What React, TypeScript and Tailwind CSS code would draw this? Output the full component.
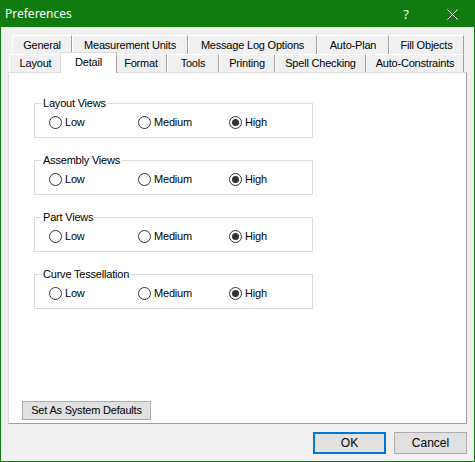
import React from "react";

const topTabs: [string, number][] = [
  ["General", 60],
  ["Measurement Units", 116],
  ["Message Log Options", 129],
  ["Auto-Plan", 72],
  ["Fill Objects", 75],
];

const bottomTabs: [string, number][] = [
  ["Layout", 53],
  ["Detail", 53],
  ["Format", 52],
  ["Tools", 52],
  ["Printing", 56],
  ["Spell Checking", 91],
  ["Auto-Constraints", 98],
];

const groups = ["Layout Views", "Assembly Views", "Part Views", "Curve Tessellation"];

function Radio({ label, checked, w }: { label: string; checked?: boolean; w: string }) {
  return (
    <div className={`flex items-center ${w}`}>
      <div className="w-[13px] h-[13px] rounded-full border border-[#333333] bg-white flex items-center justify-center">
        {checked && <div className="w-[7px] h-[7px] rounded-full bg-[#333333]" />}
      </div>
      <span className="ml-[3px] text-[11px] leading-[13px] tracking-[-0.2px] text-black">{label}</span>
    </div>
  );
}

function Group({ title }: { title: string }) {
  return (
    <div className="relative w-[279px] h-[35px] border border-[#dcdcdc]">
      <span className="absolute left-[7px] -top-[8px] bg-white px-[1px] text-[11px] leading-[14px] tracking-[-0.2px] text-black">
        {title}
      </span>
      <div className="flex pt-[12px] pl-[14px]">
        <Radio label="Low" w="w-[89px]" />
        <Radio label="Medium" w="w-[91px]" />
        <Radio label="High" w="w-[60px]" checked />
      </div>
    </div>
  );
}

export default function App() {
  return (
    <div
      className="w-[475px] h-[462px] border border-[#107c10] bg-[#f0f0f0] flex flex-col overflow-hidden"
      style={{ fontFamily: '"Liberation Sans", Arial, sans-serif' }}
    >
      {/* Title bar */}
      <div className="h-[26px] bg-[#107c10] flex items-center text-white">
        <span className="ml-[4px] text-[12px] leading-[16px]" style={{ fontFamily: '"Noto Sans", sans-serif' }}>
          Preferences
        </span>
        <span className="ml-auto mr-[38px] text-[13px] leading-[16px]" style={{ fontFamily: '"Noto Sans", sans-serif' }}>
          ?
        </span>
        <svg width="11" height="11" viewBox="0 0 11 11" className="mr-[16px]">
          <path d="M0.5 0.5 L10.5 10.5 M10.5 0.5 L0.5 10.5" stroke="white" strokeWidth="1" />
        </svg>
      </div>

      {/* Tabs row 1 */}
      <div className="flex mt-[8px] ml-[11px] h-[19px]">
        {topTabs.map(([t, w]) => (
          <div
            key={t}
            className="flex items-center justify-center border-l border-t border-white border-r border-r-[#a0a0a0] text-[11px] leading-[13px] tracking-[-0.2px] text-black"
            style={{ width: w }}
          >
            {t}
          </div>
        ))}
      </div>

      {/* Tabs row 2 */}
      <div className="flex items-end ml-[8px] h-[18px] relative z-10">
        {bottomTabs.map(([t, w]) => {
          const sel = t === "Detail";
          return sel ? (
            <div
              key={t}
              className="flex items-start justify-center pt-[3px] h-[21px] -mb-[1px] -mx-[2px] bg-white border-l border-t border-[#dcdcdc] border-r border-r-[#a0a0a0] text-[11px] leading-[13px] tracking-[-0.2px] text-black"
              style={{ width: w + 4 }}
            >
              {t}
            </div>
          ) : (
            <div
              key={t}
              className="flex items-center justify-center h-[18px] border-l border-t border-white border-r border-r-[#a0a0a0] text-[11px] leading-[13px] tracking-[-0.2px] text-black"
              style={{ width: w }}
            >
              {t}
            </div>
          );
        })}
      </div>

      {/* Panel */}
      <div className="ml-[7px] w-[459px] h-[352px] bg-white border-l border-t border-[#dcdcdc] border-r border-b border-r-[#a0a0a0] border-b-[#a0a0a0] flex flex-col">
        <div className="flex flex-col gap-[22px] mt-[30px] ml-[25px]">
          {groups.map((g) => (
            <Group key={g} title={g} />
          ))}
        </div>
        <button className="mt-auto mb-[3px] ml-[13px] w-[129px] h-[19px] bg-[#e1e1e1] border border-[#adadad] text-[11px] leading-[13px] tracking-[-0.2px] text-black">
          Set As System Defaults
        </button>
      </div>

      {/* Footer */}
      <div className="flex justify-end mt-[8px] mr-[7px] gap-[8px]">
        <button className="w-[73px] h-[22px] bg-[#e1e1e1] border-2 border-[#0078d7] text-[12px] leading-[14px] text-black">
          OK
        </button>
        <button className="w-[73px] h-[22px] bg-[#e1e1e1] border border-[#adadad] text-[12px] leading-[14px] text-black">
          Cancel
        </button>
      </div>
    </div>
  );
}
